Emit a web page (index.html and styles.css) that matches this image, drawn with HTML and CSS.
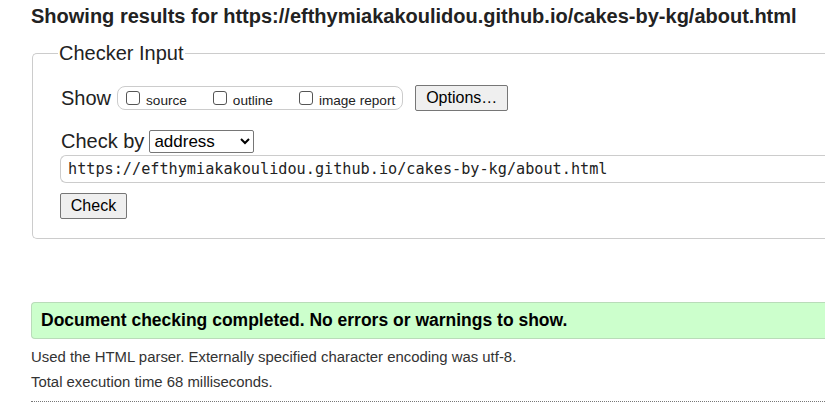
FILE: index.html
```html
<!DOCTYPE html>
<html>
<head>
<meta charset="utf-8">
<link rel="stylesheet" href="styles.css">
</head>
<body>
<h2 class="title">Showing results for https://efthymiakakoulidou.github.io/cakes-by-kg/about.html</h2>
<form class="checker">
  <fieldset class="fs">
    <legend class="legend">Checker Input</legend>
    <div class="inner">
      <div class="row show-row">
        <span class="label">Show</span>
        <span class="opts">
          <label class="opt"><input type="checkbox" class="cb"><span>source</span></label>
          <label class="opt"><input type="checkbox" class="cb"><span>outline</span></label>
          <label class="opt"><input type="checkbox" class="cb"><span>image report</span></label>
        </span>
        <button type="button" class="btn opt-btn">Options…</button>
      </div>
      <div class="row by-row">
        <span class="label">Check by</span>
        <select class="sel"><option>address</option></select>
      </div>
      <div class="url">https://efthymiakakoulidou.github.io/cakes-by-kg/about.html</div>
      <button type="button" class="btn check-btn">Check</button>
    </div>
  </fieldset>
</form>
<div class="success">Document checking completed. No errors or warnings to show.</div>
<p class="details first">Used the HTML parser. Externally specified character encoding was utf-8.</p>
<p class="details second">Total execution time 68 milliseconds.</p>
<hr class="dots">
</body>
</html>
```
FILE: styles.css
```css
html, body { margin: 0; padding: 0; background: #fff; }
body {
  font-family: "Liberation Sans", Arial, sans-serif;
  color: #222;
  padding: 0 0 0 31px;
  overflow: hidden;
}
.title {
  margin: 0;
  padding-top: 5px;
  font-size: 20px;
  line-height: 23px;
  font-weight: bold;
  color: #222;
  white-space: nowrap;
}
.checker { margin: 14px 0 0 1px; }
.fs {
  margin: 0;
  padding: 21px 0 19px 0;
  border: 1px solid #ccc;
  border-right: none;
  border-radius: 5px 0 0 5px;
  min-width: 0;
}
.legend {
  font-size: 20px;
  line-height: 22px;
  padding: 0 1px;
  margin-left: 25px;
  color: #222;
}
.inner { padding-left: 28px; }
.row { display: flex; align-items: center; }
.show-row { height: 26px; }
.label { font-size: 20px; line-height: 23px; color: #222; }
.opts {
  display: inline-flex;
  align-items: center;
  margin-left: 6px;
  height: 22px;
  border: 1px solid #ccc;
  border-radius: 8px;
  padding: 0 7px 0 8px;
}
.opt {
  display: inline-flex;
  align-items: center;
  font-size: 13.6px;
  color: #222;
  margin-right: 26px;
}
.opt span { padding-top: 4px; }
.opt:last-child { margin-right: 0; }
.cb {
  appearance: none;
  -webkit-appearance: none;
  width: 14px;
  height: 14px;
  margin: 0 6px 0 0;
  border: 1px solid #555;
  border-radius: 3px;
  background: #fff;
}
.btn {
  font-family: "Liberation Sans", Arial, sans-serif;
  font-size: 16px;
  color: #000;
  background: #efefef;
  border: 1px solid #767676;
  border-radius: 2px;
  padding: 0;
  height: 26px;
}
.opt-btn { margin-left: 12px; width: 93px; }
.by-row { margin-top: 19px; }
.sel {
  margin-left: 5px;
  width: 105px;
  height: 23px;
  font-family: "Liberation Sans", Arial, sans-serif;
  font-size: 17px;
  border: 1px solid #767676;
  border-radius: 2px;
  background: #fff;
  color: #000;
}
.url {
  margin-top: 2px;
  margin-left: -1px;
  height: 26px;
  border: 1px solid #ccc;
  border-right: none;
  border-radius: 6px 0 0 6px;
  font-family: "DejaVu Sans Mono", "Liberation Mono", monospace;
  font-size: 15.2px;
  line-height: 26px;
  padding-left: 7px;
  color: #222;
  white-space: nowrap;
}
.check-btn { margin-top: 10px; margin-left: -1px; width: 67px; display: block; }
.success {
  margin-top: 63px;
  background: #ccffcc;
  border: 1px solid #b9dcb9;
  border-right: none;
  border-radius: 4px 0 0 4px;
  font-weight: bold;
  font-size: 17.5px;
  color: #000;
  height: 35px;
  line-height: 35px;
  padding-left: 9px;
  white-space: nowrap;
}
.details {
  margin: 0;
  font-size: 14.9px;
  line-height: 18px;
  color: #333;
  white-space: nowrap;
}
.details.first { margin-top: 9px; }
.details.second { margin-top: 7px; }
.dots {
  margin: 10px 0 0 0;
  border: none;
  border-top: 1px dotted #777;
  height: 0;
}
```
